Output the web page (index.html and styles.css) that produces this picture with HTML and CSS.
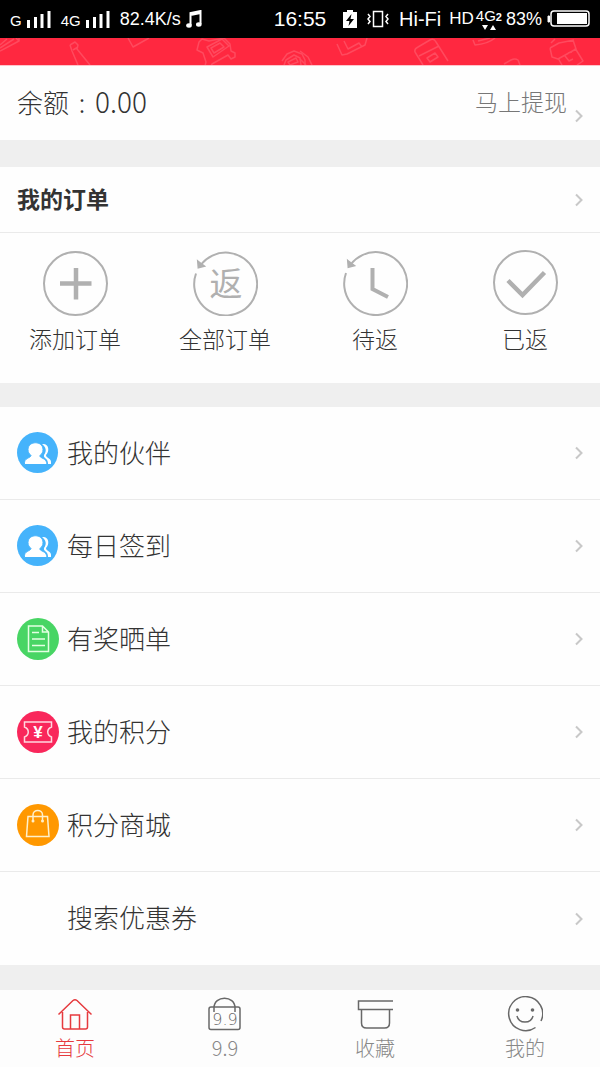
FILE: index.html
```html
<!DOCTYPE html>
<html lang="zh-CN">
<head>
  <meta charset="utf-8">
  <meta name="viewport" content="width=device-width, initial-scale=1">
  <title>我的</title>
  <link rel="stylesheet" href="styles.css">
</head>
<body>
  <div class="status">
    <div class="status-left">
      <span class="net">G</span>
      <svg class="bars" width="24" height="18" viewBox="0 0 24 18"><path d="M1.5 10v8M8.5 7v11M15 4v14M22 1v17" stroke="#fff" stroke-width="3"/></svg>
      <span class="net">4G</span>
      <svg class="bars" width="24" height="18" viewBox="0 0 24 18"><path d="M1.5 10v8M8.5 7v11M15 4v14M22 1v17" stroke="#fff" stroke-width="3"/></svg>
      <span class="speed">82.4K/s</span>
      <svg width="16" height="18" viewBox="0 0 16 18"><path d="M4.5 15V3L14.5 1v13M4.5 5l10-2" fill="none" stroke="#fff" stroke-width="2"/><ellipse cx="3" cy="15.5" rx="2.8" ry="2.2" fill="#fff"/><ellipse cx="12.8" cy="14.5" rx="2.8" ry="2.2" fill="#fff"/></svg>
    </div>
    <div class="time">16:55</div>
    <div class="status-right">
      <svg width="14" height="18" viewBox="0 0 14 18"><path d="M4 0h6v2h4v16H0V2h4z" fill="#fff"/><path d="M8.5 4L3 11h3.5L5.5 16 11 9H7.5z" fill="#000"/></svg>
      <svg class="vibrate" width="22" height="18" viewBox="0 0 22 18"><g fill="none" stroke="#fff" stroke-width="1.5"><rect x="6.5" y="1.5" width="9" height="15"/><path d="M1 4l2 2.5L1 9l2 2.5L1 14M21 4l-2 2.5L21 9l-2 2.5L21 14"/></g></svg>
      <span class="hifi">Hi-Fi</span>
      <span class="hd">HD</span>
      <span class="data">
        <span>4G<b>2</b></span>
        <svg width="14" height="5" viewBox="0 0 14 5"><path d="M0 0h6L3 5zM8 5h6l-3-5z" fill="#fff"/></svg>
      </span>
      <span class="percent">83%</span>
      <svg width="43" height="18" viewBox="0 0 43 18"><rect x="4" y="1" width="38" height="15" rx="3" fill="none" stroke="#fff" stroke-width="1.5"/><path d="M10 3h30v11H10z" fill="#fff"/><path d="M2.5 6v6H1V6z" fill="#fff" stroke="#fff"/></svg>
    </div>
  </div>

  <div class="banner">
    <svg viewBox="0 0 600 27" preserveAspectRatio="xMidYMid slice">
      <g fill="none" stroke="#ff4a5e" stroke-width="1.5" stroke-linejoin="round">
        <path d="M0 7L7 1M0 13L19 3V0M19 3l-3-3M0 10L14 1"/>
        <path d="M70 7l5-3 3 3-1 4 13 16M70 7l2 6 6 14M73 12l5-3"/>
        <path d="M128 0l5 9 16-9"/>
        <path d="M199 4l3-3 7 2 15-3 6 6 1 7 4 2v4l-4 2-3-4-16 9-2 4-5-2 1-4-3-9-6-3zM207 9l15-8 7 7-16 11zM211 10l9-5 4 4-10 6z"/>
        <path d="M282 23l5-7 7-3 8 3 3 6v5M284 27l2-5 8-5 6 3 1 7M288 24l8-4 2 4-8 3z"/>
        <path d="M300 13l8 6 4 8M300 21l6 6"/>
        <path d="M337 6l5 11 5-1 18-9 2-7M344 3l4 8 11-6 3 4"/>
        <path d="M415 14q-1-3 3-5l12-7q4-2 6 2l12 19M415 14l8 13M419 18l20-10M427 20l8-5 3 4-8 5z"/>
        <path d="M473 2l2 5q13-1 20-7M478 3l12-3"/>
        <path d="M504 26l7-4q4-2 7 0l2 5"/>
        <path d="M551 5l4-4M550 10l9-5 15-3M550 10l2 9 6 2 18-10-3-9M558 20l4 7M575 10l8 13-6 4M565 18l4 5 4-2M568 15l4-1"/>
      </g>
    </svg>
  </div>

  <section class="balance">
    <span class="balance-text">余额<span class="colon">:</span><span class="amount">0.00</span></span>
    <a class="withdraw" href="#"><span>马上提现</span>
      <svg class="arrow" viewBox="0 0 8 14"><path d="M1 1.5L6.5 7 1 12.5"/></svg>
    </a>
  </section>

  <section class="orders">
    <a class="orders-head" href="#">
      <h2>我的订单</h2>
      <svg class="arrow" viewBox="0 0 8 14"><path d="M1 1.5L6.5 7 1 12.5"/></svg>
    </a>
    <div class="orders-grid">
      <a href="#">
        <svg class="order-icon" viewBox="0 0 66 66"><circle cx="33.5" cy="33.5" r="31.5"/><path d="M34 18v31.5M18 33.5h31.5" stroke-width="4.5"/></svg>
        添加订单
      </a>
      <a href="#">
        <svg class="order-icon" viewBox="0 0 66 66"><path d="M9 14.5A31.5 31.5 0 1 1 4 23.5"/><path class="solid" d="M6 11.500l6 4.500-5.500 1.500z"/><text x="34" y="46">返</text></svg>
        全部订单
      </a>
      <a href="#">
        <svg class="order-icon" viewBox="0 0 66 66"><path d="M9 14A31.5 31.5 0 1 1 4 23"/><path class="solid" d="M6 11l6 4.5-5.5 1.5z"/><path d="M30.500 18v21l15.5 8" stroke-width="4"/></svg>
        待返
      </a>
      <a href="#">
        <svg class="order-icon" viewBox="0 0 66 66"><circle cx="33.5" cy="32.5" r="31.5"/><path d="M16 30.500L30.500 45 52.500 22.500" stroke-width="4.500"/></svg>
        已返
      </a>
    </div>
  </section>

  <section class="menu">
    <a href="#">
      <svg class="menu-icon" viewBox="0 0 42 42"><circle cx="20.5" cy="20.5" r="20.5" fill="#45b3fb"/><g fill="#fff"><path d="M25 12c7-1 8 7 4 11 0 4 6 2 5 9h-3c0-7-5-5-4-9 3-4 2-8-2-11z"/><path d="M11 17.500c0-9 15-9 15 0 0 3-1 4-3 6-1 3 7 2 7 9H7.500c-1-7 6-6 6.500-9-2-2-3-3-3-6z" stroke="#45b3fb"/></g></svg>
      <span>我的伙伴</span>
      <svg class="arrow" viewBox="0 0 8 14"><path d="M1 1.5L6.5 7 1 12.5"/></svg>
    </a>
    <a href="#">
      <svg class="menu-icon" viewBox="0 0 42 42"><circle cx="20.5" cy="20.5" r="20.5" fill="#45b3fb"/><g fill="#fff"><path d="M25 12c7-1 8 7 4 11 0 4 6 2 5 9h-3c0-7-5-5-4-9 3-4 2-8-2-11z"/><path d="M11 17.500c0-9 15-9 15 0 0 3-1 4-3 6-1 3 7 2 7 9H7.500c-1-7 6-6 6.500-9-2-2-3-3-3-6z" stroke="#45b3fb"/></g></svg>
      <span>每日签到</span>
      <svg class="arrow" viewBox="0 0 8 14"><path d="M1 1.5L6.5 7 1 12.5"/></svg>
    </a>
    <a href="#">
      <svg class="menu-icon" viewBox="0 0 42 42"><circle cx="21" cy="21" r="21" fill="#48d564"/><path d="M11.5 8h14l6 6v19.500h-20zM25.500 8v6h6M15 14.500h7M15 21h13M15 27.500h13" fill="none" stroke="#e4ffe2" stroke-width="1.5"/></svg>
      <span>有奖晒单</span>
      <svg class="arrow" viewBox="0 0 8 14"><path d="M1 1.5L6.5 7 1 12.5"/></svg>
    </a>
    <a href="#">
      <svg class="menu-icon" viewBox="0 0 42 42"><circle cx="21" cy="21" r="21" fill="#f9275b"/><path d="M7.500 11h27v5c-5 2-5 8 0 10v5h-27v-5c5-2 5-8 0-10z" fill="none" stroke="#ffd7df" stroke-width="1.5"/><text class="yen" x="21" y="27">¥</text></svg>
      <span>我的积分</span>
      <svg class="arrow" viewBox="0 0 8 14"><path d="M1 1.5L6.5 7 1 12.5"/></svg>
    </a>
    <a href="#">
      <svg class="menu-icon" viewBox="0 0 42 42"><circle cx="21" cy="21" r="21" fill="#ff9800"/><path d="M11 12.500H30.500l1.500 20H9.500zM16 17V11c0-6 9.500-6 9.500 0v6" fill="none" stroke="#fff0ca" stroke-width="1.5"/><g fill="#fff0ca"><circle cx="16" cy="17" r="1.500"/><circle cx="25.500" cy="17" r="1.500"/></g></svg>
      <span>积分商城</span>
      <svg class="arrow" viewBox="0 0 8 14"><path d="M1 1.5L6.5 7 1 12.5"/></svg>
    </a>
    <a href="#">
      <i class="menu-icon"></i>
      <span>搜索优惠券</span>
      <svg class="arrow" viewBox="0 0 8 14"><path d="M1 1.5L6.5 7 1 12.5"/></svg>
    </a>
  </section>

  <nav class="tabs">
    <a class="active" href="#">
      <svg viewBox="0 0 36 36"><path d="M1.5 18.500L16 4.500q2-1.5 4 0L34.5 18.500M5.500 16v15q0 2 2 2h21q2 0 2-2V16M13.500 33V19h9v14"/></svg>
      首页
    </a>
    <a href="#">
      <svg viewBox="0 0 36 36"><rect x="2" y="11" width="31" height="22.500" rx="2"/><path d="M7 16v-4c0-13 21-13 21 0v4"/><text x="18" y="29">9.9</text></svg>
      9.9
    </a>
    <a href="#">
      <svg viewBox="0 0 36 36"><path d="M36 5H1.500V13.500H36M4.500 13.500v13.500q0 5 5 5h18q5 0 5-5V13.500"/></svg>
      收藏
    </a>
    <a href="#">
      <svg viewBox="0 0 36 36"><path d="M28.500 31.500A17 17 0 1 1 34 25M10 20c2 8 14 8 16 0"/><circle class="eye" cx="10.500" cy="14" r="1.800"/><circle class="eye" cx="25.500" cy="14" r="1.800"/></svg>
      我的
    </a>
  </nav>
</body>
</html>
```
FILE: styles.css
```css
* {
  box-sizing: border-box;
}

body {
  margin: 0;
  min-height: 100vh;
  display: flex;
  flex-direction: column;
  background: #efefef;
  color: #333;
  font-family: "Noto Sans CJK SC", sans-serif;
  font-weight: 300;
}

a {
  color: inherit;
  text-decoration: none;
}

svg {
  display: block;
  flex-shrink: 0;
}

/* status bar */
.status {
  display: grid;
  grid-template-columns: 1fr auto 1fr;
  align-items: center;
  height: 38px;
  padding: 0 10px;
  background: #000;
  color: #fff;
  font-family: "Liberation Sans", sans-serif;
  font-weight: 400;
  font-size: 18px;
  line-height: 20px;
}

.status-left,
.status-right {
  display: flex;
  align-items: center;
}

.status-right {
  justify-content: flex-end;
}

.net {
  padding-top: 3px;
  font-size: 15px;
}

.bars {
  margin: 0 10px 0 5px;
}

.speed {
  margin-right: 5px;
}

.time {
  font-size: 21px;
}

.vibrate {
  margin: 0 10px;
}

.hifi {
  margin-right: 8px;
  font-size: 20px;
}

.hd {
  margin-right: 2px;
  font-size: 17px;
}

.data {
  display: flex;
  flex-direction: column;
  align-items: center;
  margin-right: 4px;
  font-size: 15px;
  line-height: 15px;
}

.data b {
  font-size: 11px;
}

.percent {
  margin-right: 5px;
}

.banner {
  height: 28px;
  background: #ff2840;
  border-bottom: 1px solid #ffc4cb;
}

.banner svg {
  width: 100%;
  height: 27px;
}

/* balance */
.balance {
  display: flex;
  align-items: center;
  justify-content: space-between;
  height: 74px;
  padding: 0 17px;
  background: #fefefe;
  font-size: 26px;
}

.balance-text {
  padding-bottom: 4px;
}

.colon {
  display: inline-block;
  width: 26px;
  text-align: center;
}

.amount {
  font-size: 28px;
}

.withdraw {
  display: flex;
  align-items: flex-end;
  gap: 8px;
  color: #777;
  font-size: 23px;
  line-height: 36px;
}

.withdraw span {
  padding-bottom: 4px;
}

.arrow {
  width: 8px;
  height: 14px;
  fill: none;
  stroke: #c8c8c8;
  stroke-width: 2;
}

/* orders */
.orders {
  margin-top: 27px;
  background: #fefefe;
}

.orders-head {
  display: flex;
  align-items: center;
  justify-content: space-between;
  height: 66px;
  padding: 0 17px;
  border-bottom: 1px solid #eaeaea;
}

.orders-head h2 {
  margin: 0;
  padding-bottom: 4px;
  font-size: 23px;
  font-weight: 700;
}

.orders-grid {
  display: grid;
  grid-template-columns: repeat(4, 1fr);
  height: 150px;
  padding-top: 17px;
}

.orders-grid a {
  display: flex;
  flex-direction: column;
  align-items: center;
  gap: 6px;
  font-size: 23px;
  line-height: 32px;
}

.order-icon {
  width: 66px;
  height: 66px;
  fill: none;
  stroke: #b0b0b0;
  stroke-width: 2;
}

.order-icon .solid {
  fill: #b0b0b0;
}

.order-icon text {
  fill: #b0b0b0;
  stroke: none;
  font-size: 33px;
  font-weight: 400;
  text-anchor: middle;
}

/* menu list */
.menu {
  margin-top: 24px;
  background: #fefefe;
}

.menu a {
  display: flex;
  align-items: center;
  height: 93px;
  padding: 0 17px;
  border-bottom: 1px solid #eaeaea;
  font-size: 26px;
}

.menu a:last-child {
  border-bottom: 0;
}

.menu span {
  flex: 1;
  padding-bottom: 4px;
}

.menu-icon {
  width: 42px;
  height: 42px;
  margin-right: 8px;
}

.yen {
  fill: #fff;
  font-family: "Liberation Sans", sans-serif;
  font-size: 17px;
  font-weight: 700;
  text-anchor: middle;
}

/* bottom tabs */
.tabs {
  display: grid;
  grid-template-columns: repeat(4, 1fr);
  height: 77px;
  margin-top: auto;
  padding-top: 6px;
  background: #fdfdfd;
}

.tabs a {
  display: flex;
  flex-direction: column;
  align-items: center;
  gap: 2px;
  color: #888;
  font-size: 20px;
  line-height: 28px;
}

.tabs .active {
  color: #e63a3e;
}

.tabs svg {
  width: 36px;
  height: 36px;
  fill: none;
  stroke: #686868;
  stroke-width: 1.5;
}

.tabs .active svg {
  stroke: #e63a3e;
}

.tabs text {
  fill: #686868;
  stroke: none;
  font-family: "DejaVu Sans", sans-serif;
  font-size: 16px;
  text-anchor: middle;
}

.tabs .eye {
  fill: #686868;
  stroke: none;
}
```
